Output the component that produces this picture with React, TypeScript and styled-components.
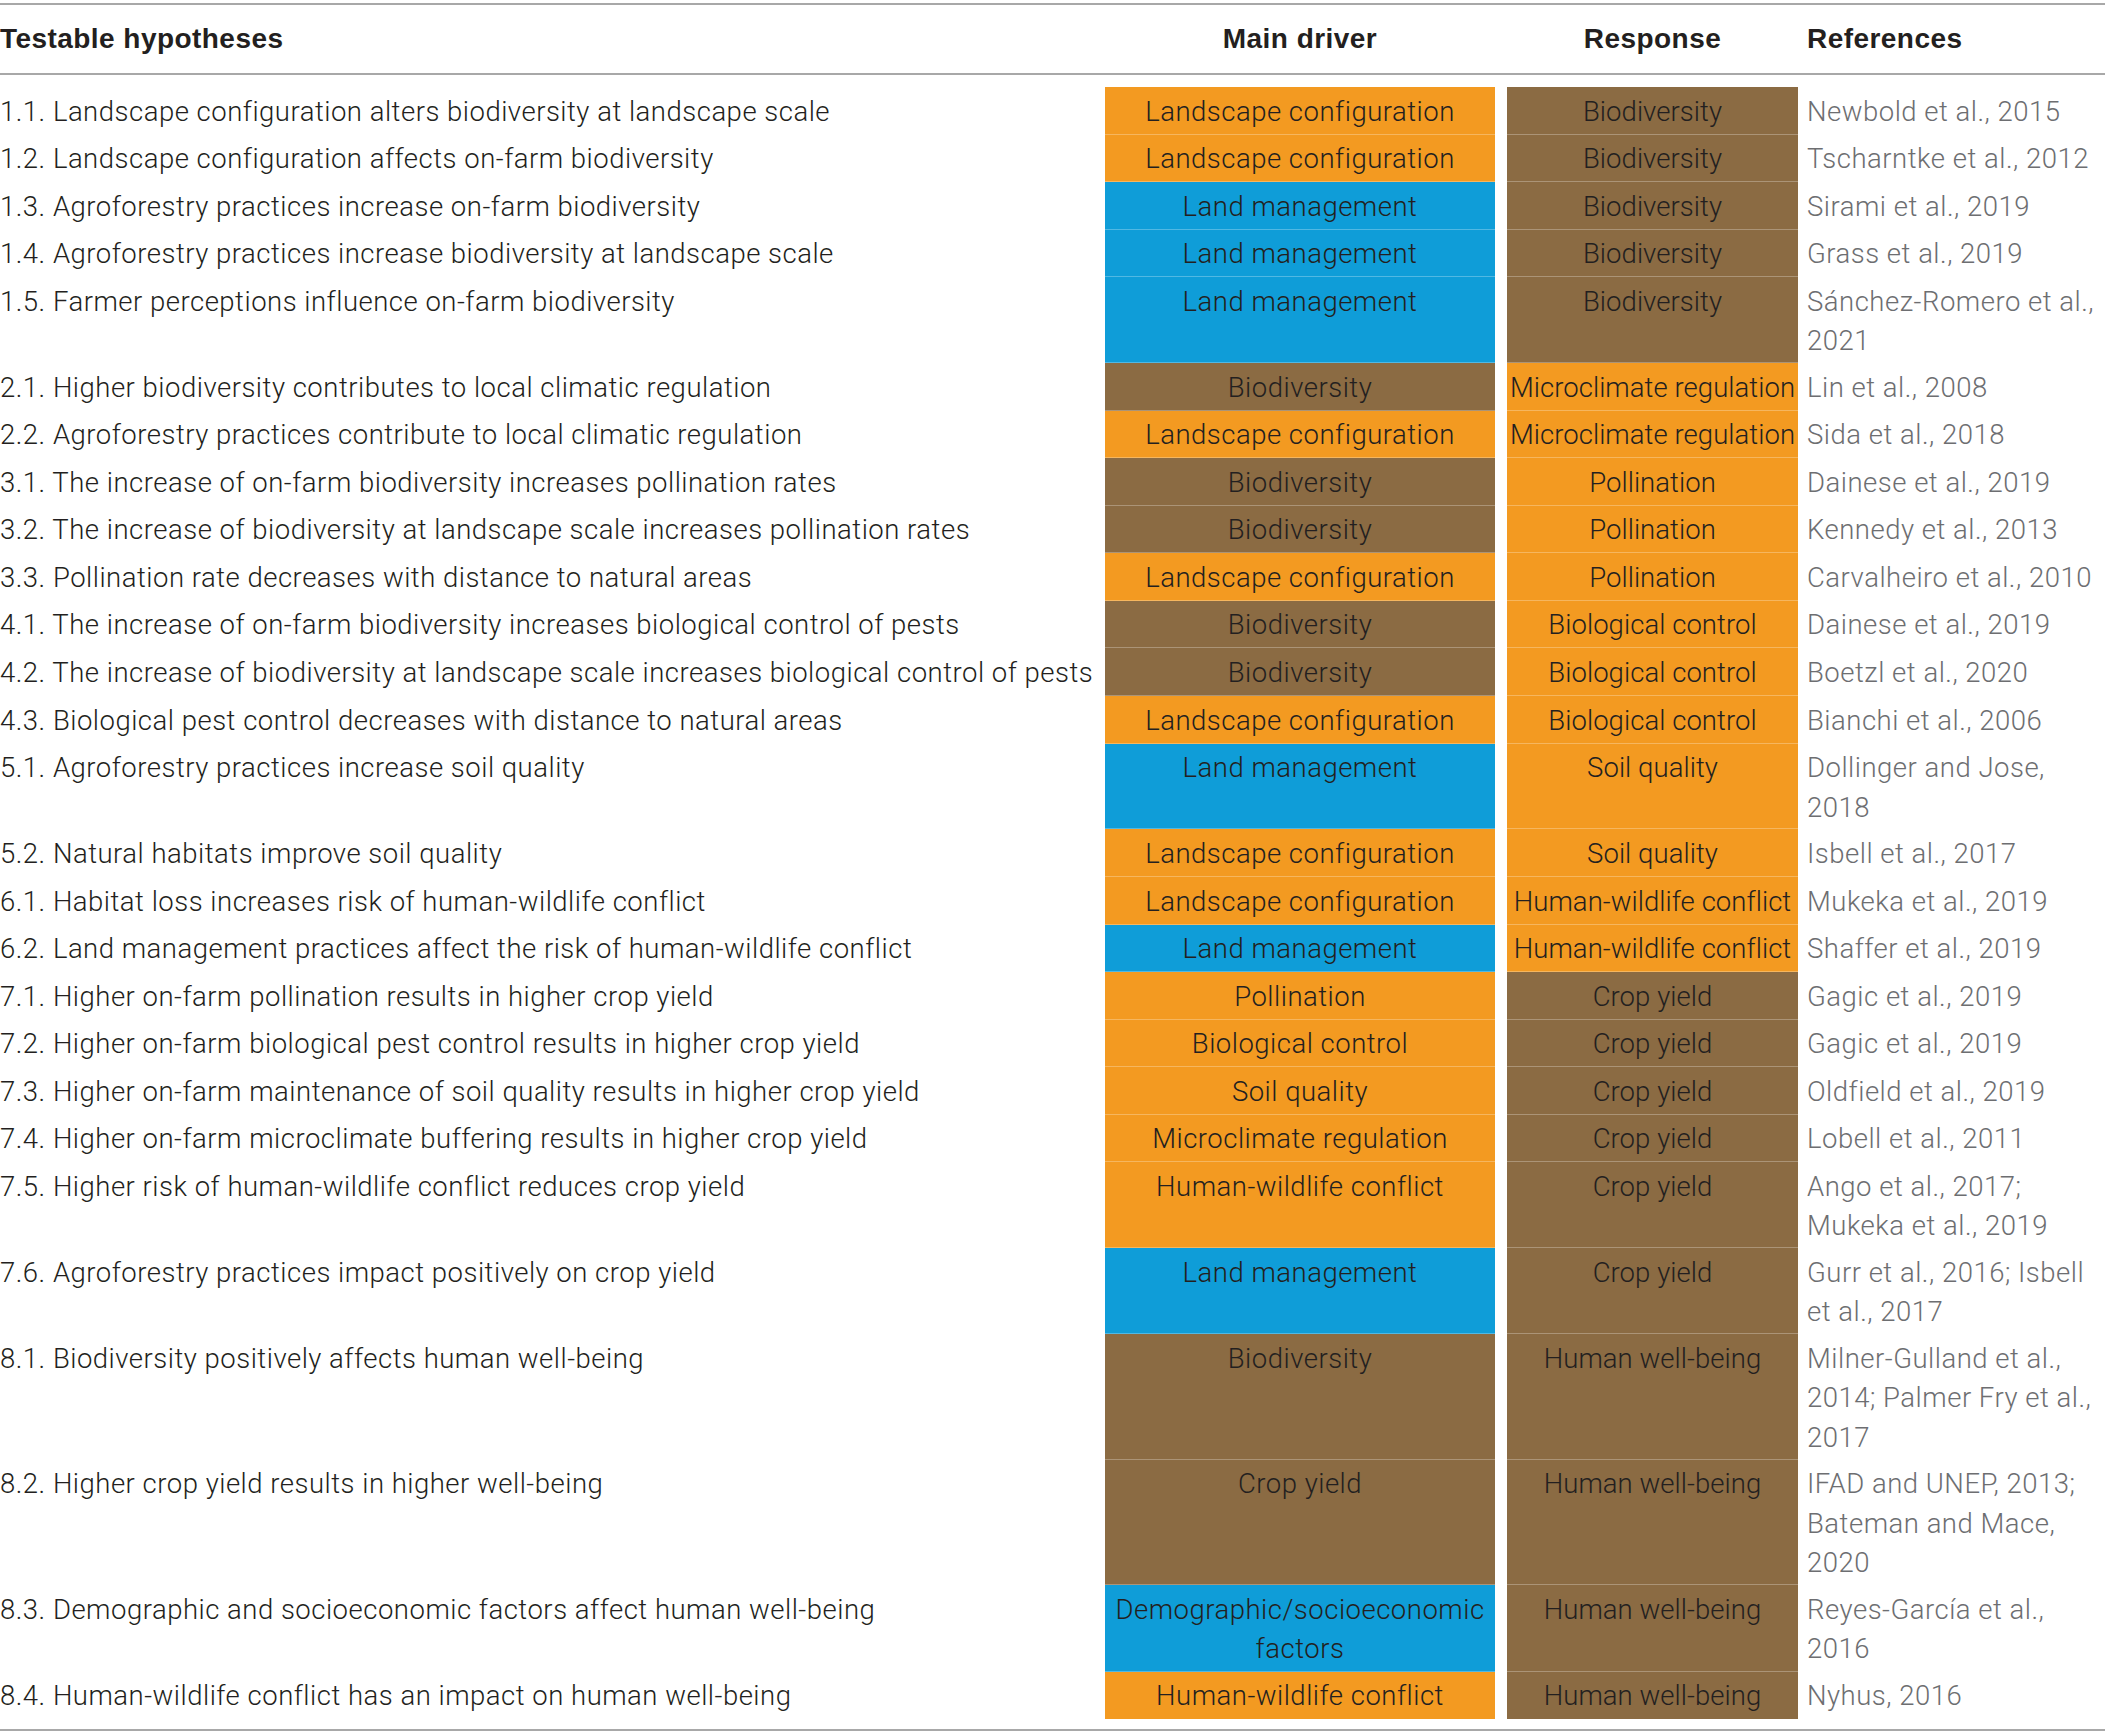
import styled, { createGlobalStyle } from "styled-components";

const GlobalStyle = createGlobalStyle`
  html, body {
    margin: 0;
    padding: 0;
    background: #fff;
  }
  body {
    font-family: Roboto, "Liberation Sans", Arial, sans-serif;
    color: #231f20;
  }
`;

const tones = {
  orange: "#f39a21",
  brown: "#8b6b43",
  blue: "#0f9dd8",
};

type Tone = keyof typeof tones;

const toneOf = (label: string): Tone => {
  if (["Biodiversity", "Crop yield", "Human well-being"].includes(label)) return "brown";
  if (label.startsWith("Land management") || label.startsWith("Demographic")) return "blue";
  return "orange";
};

const Page = styled.div`
  padding-top: 3px;
  width: 2105px;
`;

const Table = styled.div`
  border-top: 2px solid #a8a8a8;
  border-bottom: 2px solid #a8a8a8;
`;

const Grid = styled.div`
  display: grid;
  grid-template-columns: 1093px 390px 291px 1fr;
  column-gap: 12px;
`;

const Head = styled(Grid)`
  border-bottom: 2px solid #a8a8a8;
  padding: 14px 0;
  font-family: "Liberation Sans", Arial, sans-serif;
  font-weight: 700;
  font-size: 28px;
  line-height: 40px;
  letter-spacing: 0.45px;
  color: #231f20;
`;

const HeadCell = styled.div<{ $center?: boolean; $shift?: boolean }>`
  text-align: ${(p) => (p.$center ? "center" : "left")};
  margin-left: ${(p) => (p.$shift ? "-3px" : "0")};
`;

const Body = styled.div`
  padding: 12px 0 10px;
`;

const Row = styled(Grid)`
  font-size: 27.5px;
  font-weight: 300;
  line-height: 39.4px;
  letter-spacing: 0.5px;
  white-space: pre;
`;

const Hyp = styled.div`
  padding: 4.6px 0 2.55px;
`;

const Tag = styled.div<{ $tone: Tone; $last?: boolean; $tight?: boolean }>`
  display: flex;
  justify-content: center;
  align-items: flex-start;
  background: ${(p) => tones[p.$tone]};
  color: #231f20;
  text-align: center;
  padding: 4.6px 0 2.55px;
  letter-spacing: ${(p) => (p.$tight ? "0.05px" : "0.5px")};
  border-bottom: 1px solid ${(p) => (p.$last ? "transparent" : "rgba(255, 255, 255, 0.28)")};
`;

const Ref = styled.div`
  padding: 4.6px 0 2.55px;
  margin-left: -3px;
  color: #6d6e71;
`;

interface IRow {
  id: string;
  text: string;
  driver: string;
  response: string;
  refs: string;
}

const rows: IRow[] = [
  { id: "1.1.", text: "Landscape configuration alters biodiversity at landscape scale", driver: "Landscape configuration", response: "Biodiversity", refs: "Newbold et al., 2015" },
  { id: "1.2.", text: "Landscape configuration affects on-farm biodiversity", driver: "Landscape configuration", response: "Biodiversity", refs: "Tscharntke et al., 2012" },
  { id: "1.3.", text: "Agroforestry practices increase on-farm biodiversity", driver: "Land management", response: "Biodiversity", refs: "Sirami et al., 2019" },
  { id: "1.4.", text: "Agroforestry practices increase biodiversity at landscape scale", driver: "Land management", response: "Biodiversity", refs: "Grass et al., 2019" },
  { id: "1.5.", text: "Farmer perceptions influence on-farm biodiversity", driver: "Land management", response: "Biodiversity", refs: "Sánchez-Romero et al.,\n2021" },
  { id: "2.1.", text: "Higher biodiversity contributes to local climatic regulation", driver: "Biodiversity", response: "Microclimate regulation", refs: "Lin et al., 2008" },
  { id: "2.2.", text: "Agroforestry practices contribute to local climatic regulation", driver: "Landscape configuration", response: "Microclimate regulation", refs: "Sida et al., 2018" },
  { id: "3.1.", text: "The increase of on-farm biodiversity increases pollination rates", driver: "Biodiversity", response: "Pollination", refs: "Dainese et al., 2019" },
  { id: "3.2.", text: "The increase of biodiversity at landscape scale increases pollination rates", driver: "Biodiversity", response: "Pollination", refs: "Kennedy et al., 2013" },
  { id: "3.3.", text: "Pollination rate decreases with distance to natural areas", driver: "Landscape configuration", response: "Pollination", refs: "Carvalheiro et al., 2010" },
  { id: "4.1.", text: "The increase of on-farm biodiversity increases biological control of pests", driver: "Biodiversity", response: "Biological control", refs: "Dainese et al., 2019" },
  { id: "4.2.", text: "The increase of biodiversity at landscape scale increases biological control of pests", driver: "Biodiversity", response: "Biological control", refs: "Boetzl et al., 2020" },
  { id: "4.3.", text: "Biological pest control decreases with distance to natural areas", driver: "Landscape configuration", response: "Biological control", refs: "Bianchi et al., 2006" },
  { id: "5.1.", text: "Agroforestry practices increase soil quality", driver: "Land management", response: "Soil quality", refs: "Dollinger and Jose,\n2018" },
  { id: "5.2.", text: "Natural habitats improve soil quality", driver: "Landscape configuration", response: "Soil quality", refs: "Isbell et al., 2017" },
  { id: "6.1.", text: "Habitat loss increases risk of human-wildlife conflict", driver: "Landscape configuration", response: "Human-wildlife conflict", refs: "Mukeka et al., 2019" },
  { id: "6.2.", text: "Land management practices affect the risk of human-wildlife conflict", driver: "Land management", response: "Human-wildlife conflict", refs: "Shaffer et al., 2019" },
  { id: "7.1.", text: "Higher on-farm pollination results in higher crop yield", driver: "Pollination", response: "Crop yield", refs: "Gagic et al., 2019" },
  { id: "7.2.", text: "Higher on-farm biological pest control results in higher crop yield", driver: "Biological control", response: "Crop yield", refs: "Gagic et al., 2019" },
  { id: "7.3.", text: "Higher on-farm maintenance of soil quality results in higher crop yield", driver: "Soil quality", response: "Crop yield", refs: "Oldfield et al., 2019" },
  { id: "7.4.", text: "Higher on-farm microclimate buffering results in higher crop yield", driver: "Microclimate regulation", response: "Crop yield", refs: "Lobell et al., 2011" },
  { id: "7.5.", text: "Higher risk of human-wildlife conflict reduces crop yield", driver: "Human-wildlife conflict", response: "Crop yield", refs: "Ango et al., 2017;\nMukeka et al., 2019" },
  { id: "7.6.", text: "Agroforestry practices impact positively on crop yield", driver: "Land management", response: "Crop yield", refs: "Gurr et al., 2016; Isbell\net al., 2017" },
  { id: "8.1.", text: "Biodiversity positively affects human well-being", driver: "Biodiversity", response: "Human well-being", refs: "Milner-Gulland et al.,\n2014; Palmer Fry et al.,\n2017" },
  { id: "8.2.", text: "Higher crop yield results in higher well-being", driver: "Crop yield", response: "Human well-being", refs: "IFAD and UNEP, 2013;\nBateman and Mace,\n2020" },
  { id: "8.3.", text: "Demographic and socioeconomic factors affect human well-being", driver: "Demographic/socioeconomic\nfactors", response: "Human well-being", refs: "Reyes-García et al.,\n2016" },
  { id: "8.4.", text: "Human-wildlife conflict has an impact on human well-being", driver: "Human-wildlife conflict", response: "Human well-being", refs: "Nyhus, 2016" },
];

export default function App() {
  return (
    <Page>
      <GlobalStyle />
      <Table>
        <Head>
          <HeadCell>Testable hypotheses</HeadCell>
          <HeadCell $center>Main driver</HeadCell>
          <HeadCell $center>Response</HeadCell>
          <HeadCell $shift>References</HeadCell>
        </Head>
        <Body>
          {rows.map((row, i) => {
            const last = i === rows.length - 1;
            return (
              <Row key={row.id}>
                <Hyp>
                  {row.id} {row.text}
                </Hyp>
                <Tag $tone={toneOf(row.driver)} $last={last}>
                  {row.driver}
                </Tag>
                <Tag $tone={toneOf(row.response)} $last={last} $tight>
                  {row.response}
                </Tag>
                <Ref>{row.refs}</Ref>
              </Row>
            );
          })}
        </Body>
      </Table>
    </Page>
  );
}
